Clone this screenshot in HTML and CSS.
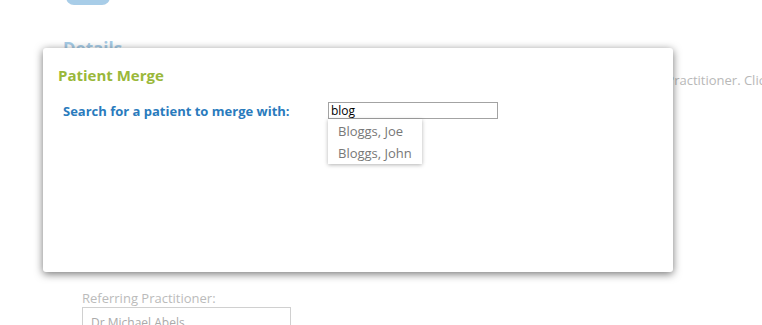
FILE: index.html
```html
<!DOCTYPE html>
<html lang="en">
<head>
    <meta charset="UTF-8">
    <title>Patient Merge</title>
    <link rel="stylesheet" href="styles.css">
</head>
<body>
    <div class="page">
        <div class="top-button"></div>
        <h2 class="section-title">Details</h2>
        <p class="hint">Referring Practitioner. Click the name to change the referrer.</p>
        <div class="field">
            <label class="field-label">Referring Practitioner:</label>
            <div class="field-box">Dr Michael Abels</div>
        </div>
    </div>

    <div class="dialog">
        <h3 class="dialog-title">Patient Merge</h3>
        <div class="search-row">
            <label class="search-label" for="search">Search for a patient to merge with:</label>
            <div class="search-wrap">
                <input type="text" id="search" class="search-input" value="blog">
                <ul class="suggestions">
                    <li>Bloggs, Joe</li>
                    <li>Bloggs, John</li>
                </ul>
            </div>
        </div>
    </div>
</body>
</html>
```

FILE: styles.css
```css
body {
    margin: 0;
    background: #fff;
    font-family: "Open Sans", "Liberation Sans", sans-serif;
    overflow: hidden;
}

/* page behind the dialog */
.page {
    padding-left: 63px;
    width: 699px;
    height: 325px;
    overflow: hidden;
}

.top-button {
    margin-left: 3px;
    margin-top: -20px;
    width: 44px;
    height: 25px;
    border-radius: 8px;
    background-color: #a8cde8;
}

.section-title {
    margin: 33px 0 0 0;
    font-size: 17px;
    font-weight: bold;
    color: #a6cbe6;
    line-height: 22px;
}

.hint {
    margin: 11px 0 0 0;
    font-size: 13px;
    color: #b8b8b8;
    white-space: nowrap;
    line-height: 18px;
    padding-left: 544px;
}

.field {
    margin-top: 200px;
    margin-left: 19px;
}

.field-label {
    display: block;
    font-size: 13px;
    color: #bbb;
    line-height: 18px;
}

.field-box {
    width: 199px;
    height: 22px;
    border: 1px solid #d0d0d0;
    padding: 6px 0 0 8px;
    font-size: 12px;
    color: #aaa;
}

/* dialog */
.dialog {
    position: absolute;
    left: 43px;
    top: 48px;
    width: 630px;
    height: 224px;
    box-sizing: border-box;
    background: #fff;
    border-radius: 3px;
    box-shadow: 0 2px 8px rgba(0, 0, 0, 0.55);
    padding: 17px 15px;
}

.dialog-title {
    margin: 0;
    font-size: 15px;
    font-weight: bold;
    color: #9ab83a;
    line-height: 21px;
}

.search-row {
    display: flex;
    align-items: flex-start;
    margin-top: 16px;
    padding-left: 5px;
}

.search-label {
    width: 265px;
    font-size: 13px;
    font-weight: bold;
    color: #2a7bbd;
    line-height: 18px;
}

.search-wrap {
    position: relative;
}

.search-input {
    display: block;
    width: 170px;
    height: 17px;
    box-sizing: border-box;
    margin: 0;
    border: 1px solid #a3a3a3;
    padding: 0 2px;
    font-family: "Open Sans", "Liberation Sans", sans-serif;
    font-size: 12px;
    color: #000;
    outline: none;
}

.suggestions {
    position: absolute;
    left: 0;
    top: 17px;
    margin: 0;
    padding: 1px 0 0 0;
    list-style: none;
    width: 94px;
    height: 45px;
    box-sizing: border-box;
    background: #fff;
    box-shadow: 0 1px 4px rgba(0, 0, 0, 0.3);
}

.suggestions li {
    padding-left: 10px;
    font-size: 13px;
    color: #777;
    line-height: 22px;
    white-space: nowrap;
}
```
